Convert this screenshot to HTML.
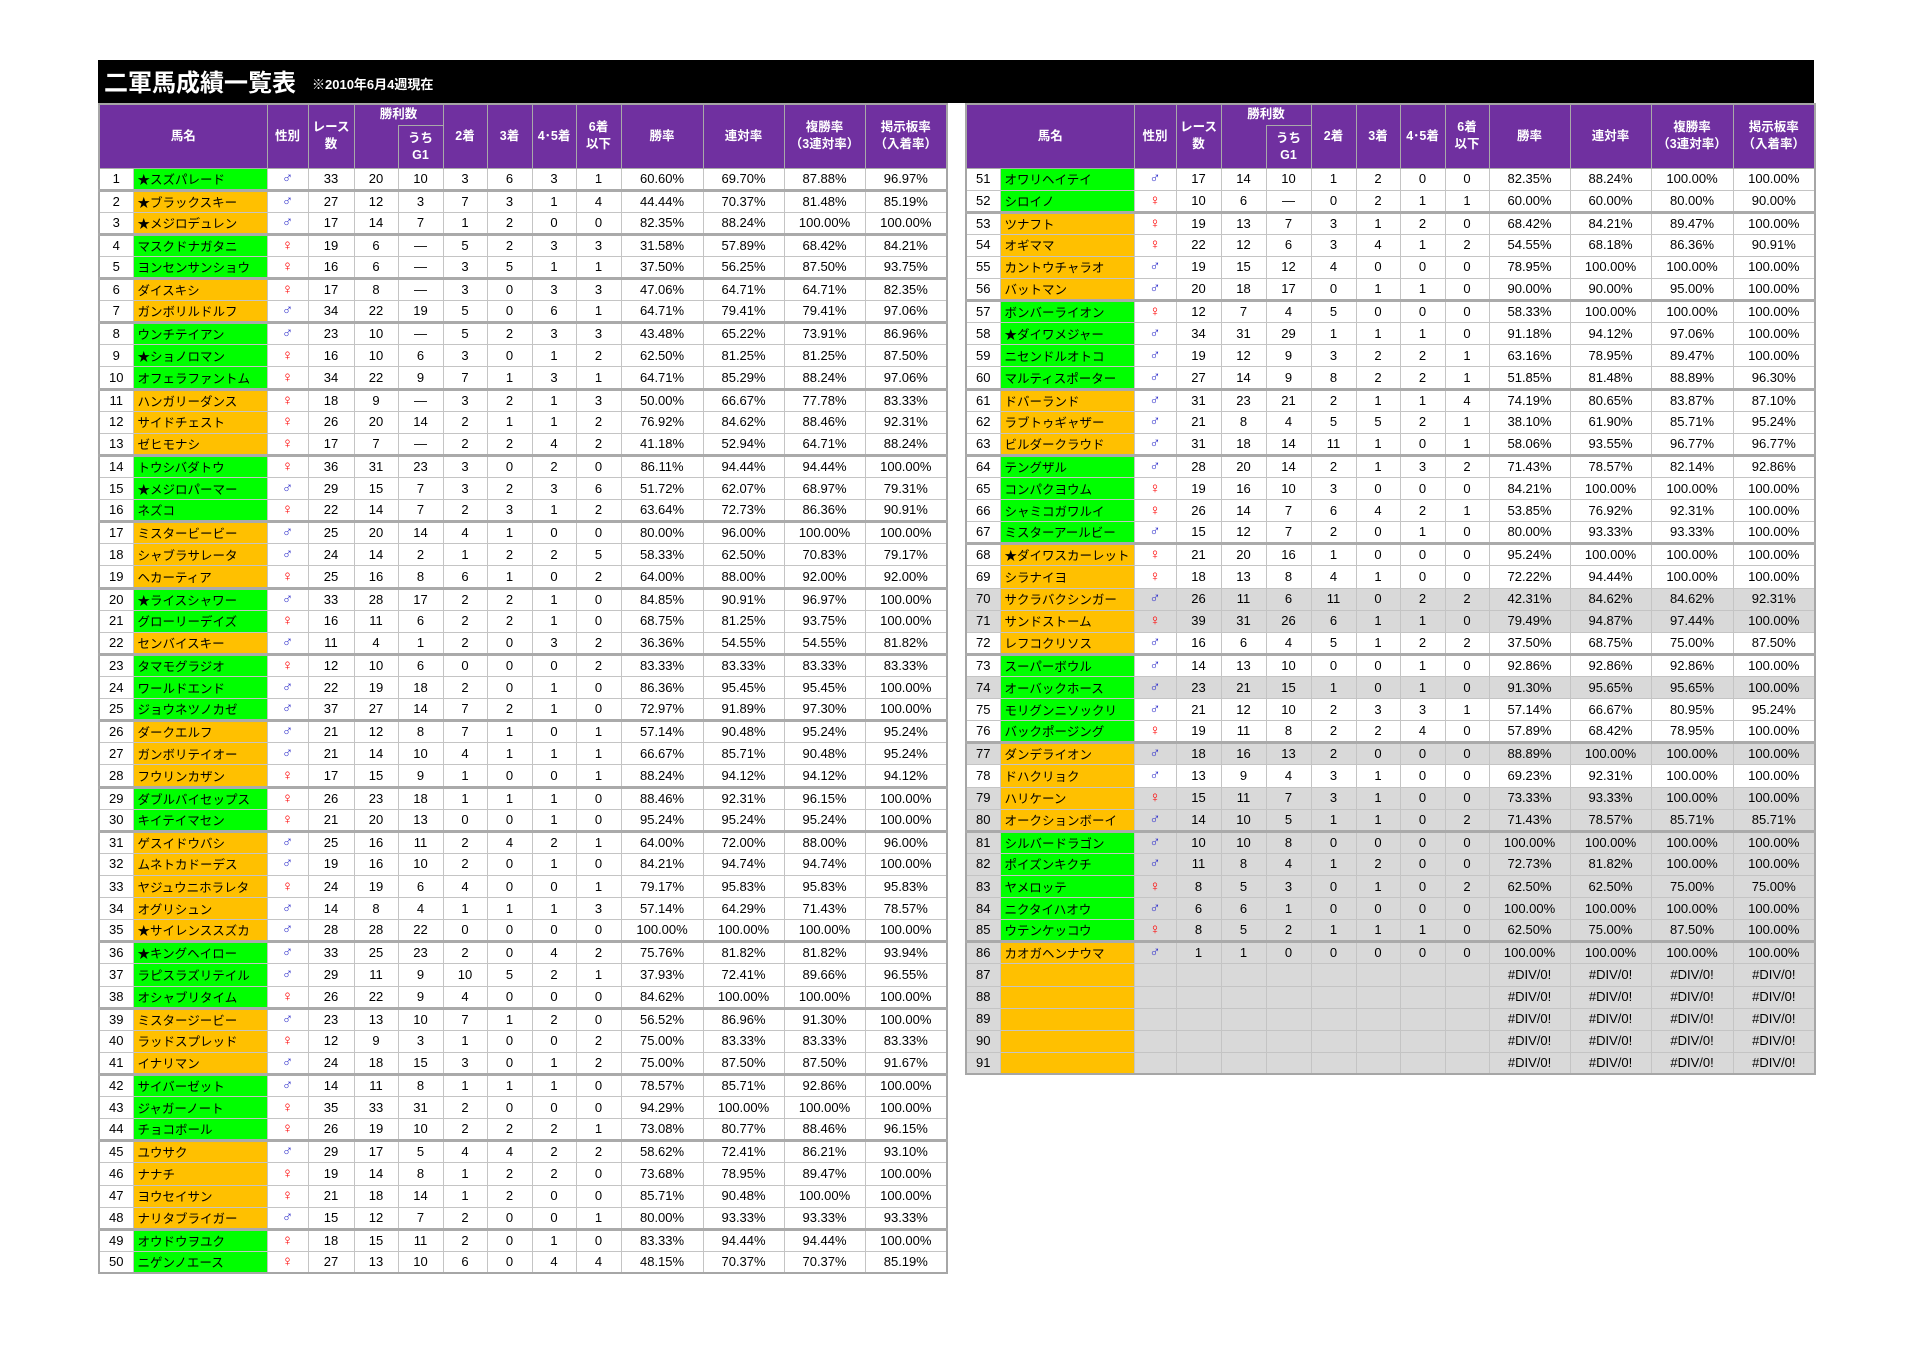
<!DOCTYPE html>
<html><head><meta charset="utf-8">
<style>
html,body{margin:0;padding:0;background:#fff;width:1913px;height:1352px;overflow:hidden;position:relative;font-family:"Liberation Sans","Noto Sans CJK JP",sans-serif;}
#bar{position:absolute;left:98px;top:60px;width:1716px;height:43px;background:#000;color:#fff;}
#bar .t{position:absolute;left:6px;top:5px;font-size:24px;font-weight:bold;letter-spacing:0;font-family:"Noto Sans CJK JP",sans-serif;line-height:32px}
#bar .s{position:absolute;left:214px;top:14px;font-size:13px;font-weight:bold;font-family:"Liberation Sans","Noto Sans CJK JP",sans-serif}
table{position:absolute;top:103px;border-collapse:collapse;table-layout:fixed;font-size:13px;color:#000}
td,th{border:1px solid #c4c4c4;padding:0;text-align:center;white-space:nowrap;overflow:hidden;line-height:14px}
th{background:#7030a0;color:#fff;font-weight:bold;font-size:12.5px;border-color:#a9a9a9;font-family:"Liberation Sans","Noto Sans CJK JP",sans-serif;line-height:17px}
tr.h1{height:21px}tr.h2{height:43px}
th.wl{border-bottom:none}th.nw{border-top:none}
tbody tr{height:22.12px}
td{background:#fff}
td.n{text-align:left;padding-left:4px;font-family:"Noto Sans CJK JP",sans-serif;font-size:12.5px}
td.g{background:#00ff00}td.o{background:#ffc000}
td.m{color:#3333cc;font-size:15px}td.f{color:#ff0000;font-size:15px}
tr.z td{background:#d9d9d9}tr.z td.g{background:#00ff00}tr.z td.o{background:#ffc000}
tr.k td{border-top:3px solid #aaa}
#L{left:98px;width:848px;border:2px solid #a6a6a6}
#R{left:965px;width:849px;border:2px solid #a6a6a6}
</style></head><body>
<div id="bar"><span class="t">二軍馬成績一覧表</span><span class="s">※2010年6月4週現在</span></div>

<table id="L">
<colgroup><col style="width:34px"><col style="width:134px"><col style="width:41px"><col style="width:46px"><col style="width:44px"><col style="width:45px"><col style="width:44px"><col style="width:45px"><col style="width:44px"><col style="width:45px"><col style="width:82px"><col style="width:81px"><col style="width:81px"><col style="width:82px"></colgroup>
<thead>
<tr class="h1"><th rowspan="2" colspan="2">馬名</th><th rowspan="2">性別</th><th rowspan="2">レース<br>数</th><th colspan="2" class="wl">勝利数</th><th rowspan="2">2着</th><th rowspan="2">3着</th><th rowspan="2">4･5着</th><th rowspan="2">6着<br>以下</th><th rowspan="2">勝率</th><th rowspan="2">連対率</th><th rowspan="2">複勝率<br>（3連対率）</th><th rowspan="2">掲示板率<br>（入着率）</th></tr>
<tr class="h2"><th class="nw"></th><th>うち<br>G1</th></tr>
</thead>
<tbody>
<tr><td>1</td><td class="n g">★スズパレード</td><td class="m">♂</td><td>33</td><td>20</td><td>10</td><td>3</td><td>6</td><td>3</td><td>1</td><td>60.60%</td><td>69.70%</td><td>87.88%</td><td>96.97%</td></tr>
<tr class="k"><td>2</td><td class="n o">★ブラックスキー</td><td class="m">♂</td><td>27</td><td>12</td><td>3</td><td>7</td><td>3</td><td>1</td><td>4</td><td>44.44%</td><td>70.37%</td><td>81.48%</td><td>85.19%</td></tr>
<tr><td>3</td><td class="n o">★メジロデュレン</td><td class="m">♂</td><td>17</td><td>14</td><td>7</td><td>1</td><td>2</td><td>0</td><td>0</td><td>82.35%</td><td>88.24%</td><td>100.00%</td><td>100.00%</td></tr>
<tr class="k"><td>4</td><td class="n g">マスクドナガタニ</td><td class="f">♀</td><td>19</td><td>6</td><td>—</td><td>5</td><td>2</td><td>3</td><td>3</td><td>31.58%</td><td>57.89%</td><td>68.42%</td><td>84.21%</td></tr>
<tr><td>5</td><td class="n g">ヨンセンサンショウ</td><td class="f">♀</td><td>16</td><td>6</td><td>—</td><td>3</td><td>5</td><td>1</td><td>1</td><td>37.50%</td><td>56.25%</td><td>87.50%</td><td>93.75%</td></tr>
<tr class="k"><td>6</td><td class="n o">ダイスキシ</td><td class="f">♀</td><td>17</td><td>8</td><td>—</td><td>3</td><td>0</td><td>3</td><td>3</td><td>47.06%</td><td>64.71%</td><td>64.71%</td><td>82.35%</td></tr>
<tr><td>7</td><td class="n o">ガンボリルドルフ</td><td class="m">♂</td><td>34</td><td>22</td><td>19</td><td>5</td><td>0</td><td>6</td><td>1</td><td>64.71%</td><td>79.41%</td><td>79.41%</td><td>97.06%</td></tr>
<tr class="k"><td>8</td><td class="n g">ウンチテイアン</td><td class="m">♂</td><td>23</td><td>10</td><td>—</td><td>5</td><td>2</td><td>3</td><td>3</td><td>43.48%</td><td>65.22%</td><td>73.91%</td><td>86.96%</td></tr>
<tr><td>9</td><td class="n g">★ショノロマン</td><td class="f">♀</td><td>16</td><td>10</td><td>6</td><td>3</td><td>0</td><td>1</td><td>2</td><td>62.50%</td><td>81.25%</td><td>81.25%</td><td>87.50%</td></tr>
<tr><td>10</td><td class="n g">オフェラファントム</td><td class="f">♀</td><td>34</td><td>22</td><td>9</td><td>7</td><td>1</td><td>3</td><td>1</td><td>64.71%</td><td>85.29%</td><td>88.24%</td><td>97.06%</td></tr>
<tr class="k"><td>11</td><td class="n o">ハンガリーダンス</td><td class="f">♀</td><td>18</td><td>9</td><td>—</td><td>3</td><td>2</td><td>1</td><td>3</td><td>50.00%</td><td>66.67%</td><td>77.78%</td><td>83.33%</td></tr>
<tr><td>12</td><td class="n o">サイドチェスト</td><td class="f">♀</td><td>26</td><td>20</td><td>14</td><td>2</td><td>1</td><td>1</td><td>2</td><td>76.92%</td><td>84.62%</td><td>88.46%</td><td>92.31%</td></tr>
<tr><td>13</td><td class="n o">ゼヒモナシ</td><td class="f">♀</td><td>17</td><td>7</td><td>—</td><td>2</td><td>2</td><td>4</td><td>2</td><td>41.18%</td><td>52.94%</td><td>64.71%</td><td>88.24%</td></tr>
<tr class="k"><td>14</td><td class="n g">トウシバダトウ</td><td class="f">♀</td><td>36</td><td>31</td><td>23</td><td>3</td><td>0</td><td>2</td><td>0</td><td>86.11%</td><td>94.44%</td><td>94.44%</td><td>100.00%</td></tr>
<tr><td>15</td><td class="n g">★メジロパーマー</td><td class="m">♂</td><td>29</td><td>15</td><td>7</td><td>3</td><td>2</td><td>3</td><td>6</td><td>51.72%</td><td>62.07%</td><td>68.97%</td><td>79.31%</td></tr>
<tr><td>16</td><td class="n g">ネズコ</td><td class="f">♀</td><td>22</td><td>14</td><td>7</td><td>2</td><td>3</td><td>1</td><td>2</td><td>63.64%</td><td>72.73%</td><td>86.36%</td><td>90.91%</td></tr>
<tr class="k"><td>17</td><td class="n o">ミスタービービー</td><td class="m">♂</td><td>25</td><td>20</td><td>14</td><td>4</td><td>1</td><td>0</td><td>0</td><td>80.00%</td><td>96.00%</td><td>100.00%</td><td>100.00%</td></tr>
<tr><td>18</td><td class="n o">シャブラサレータ</td><td class="m">♂</td><td>24</td><td>14</td><td>2</td><td>1</td><td>2</td><td>2</td><td>5</td><td>58.33%</td><td>62.50%</td><td>70.83%</td><td>79.17%</td></tr>
<tr><td>19</td><td class="n o">ヘカーティア</td><td class="f">♀</td><td>25</td><td>16</td><td>8</td><td>6</td><td>1</td><td>0</td><td>2</td><td>64.00%</td><td>88.00%</td><td>92.00%</td><td>92.00%</td></tr>
<tr class="k"><td>20</td><td class="n g">★ライスシャワー</td><td class="m">♂</td><td>33</td><td>28</td><td>17</td><td>2</td><td>2</td><td>1</td><td>0</td><td>84.85%</td><td>90.91%</td><td>96.97%</td><td>100.00%</td></tr>
<tr><td>21</td><td class="n g">グローリーデイズ</td><td class="f">♀</td><td>16</td><td>11</td><td>6</td><td>2</td><td>2</td><td>1</td><td>0</td><td>68.75%</td><td>81.25%</td><td>93.75%</td><td>100.00%</td></tr>
<tr><td>22</td><td class="n o">センバイスキー</td><td class="m">♂</td><td>11</td><td>4</td><td>1</td><td>2</td><td>0</td><td>3</td><td>2</td><td>36.36%</td><td>54.55%</td><td>54.55%</td><td>81.82%</td></tr>
<tr class="k"><td>23</td><td class="n g">タマモグラジオ</td><td class="f">♀</td><td>12</td><td>10</td><td>6</td><td>0</td><td>0</td><td>0</td><td>2</td><td>83.33%</td><td>83.33%</td><td>83.33%</td><td>83.33%</td></tr>
<tr><td>24</td><td class="n g">ワールドエンド</td><td class="m">♂</td><td>22</td><td>19</td><td>18</td><td>2</td><td>0</td><td>1</td><td>0</td><td>86.36%</td><td>95.45%</td><td>95.45%</td><td>100.00%</td></tr>
<tr><td>25</td><td class="n g">ジョウネツノカゼ</td><td class="m">♂</td><td>37</td><td>27</td><td>14</td><td>7</td><td>2</td><td>1</td><td>0</td><td>72.97%</td><td>91.89%</td><td>97.30%</td><td>100.00%</td></tr>
<tr class="k"><td>26</td><td class="n o">ダークエルフ</td><td class="m">♂</td><td>21</td><td>12</td><td>8</td><td>7</td><td>1</td><td>0</td><td>1</td><td>57.14%</td><td>90.48%</td><td>95.24%</td><td>95.24%</td></tr>
<tr><td>27</td><td class="n o">ガンボリテイオー</td><td class="m">♂</td><td>21</td><td>14</td><td>10</td><td>4</td><td>1</td><td>1</td><td>1</td><td>66.67%</td><td>85.71%</td><td>90.48%</td><td>95.24%</td></tr>
<tr><td>28</td><td class="n o">フウリンカザン</td><td class="f">♀</td><td>17</td><td>15</td><td>9</td><td>1</td><td>0</td><td>0</td><td>1</td><td>88.24%</td><td>94.12%</td><td>94.12%</td><td>94.12%</td></tr>
<tr class="k"><td>29</td><td class="n g">ダブルバイセップス</td><td class="f">♀</td><td>26</td><td>23</td><td>18</td><td>1</td><td>1</td><td>1</td><td>0</td><td>88.46%</td><td>92.31%</td><td>96.15%</td><td>100.00%</td></tr>
<tr><td>30</td><td class="n g">キイテイマセン</td><td class="f">♀</td><td>21</td><td>20</td><td>13</td><td>0</td><td>0</td><td>1</td><td>0</td><td>95.24%</td><td>95.24%</td><td>95.24%</td><td>100.00%</td></tr>
<tr class="k"><td>31</td><td class="n o">ゲスイドウバシ</td><td class="m">♂</td><td>25</td><td>16</td><td>11</td><td>2</td><td>4</td><td>2</td><td>1</td><td>64.00%</td><td>72.00%</td><td>88.00%</td><td>96.00%</td></tr>
<tr><td>32</td><td class="n o">ムネトカドーデス</td><td class="m">♂</td><td>19</td><td>16</td><td>10</td><td>2</td><td>0</td><td>1</td><td>0</td><td>84.21%</td><td>94.74%</td><td>94.74%</td><td>100.00%</td></tr>
<tr><td>33</td><td class="n o">ヤジュウニホラレタ</td><td class="f">♀</td><td>24</td><td>19</td><td>6</td><td>4</td><td>0</td><td>0</td><td>1</td><td>79.17%</td><td>95.83%</td><td>95.83%</td><td>95.83%</td></tr>
<tr><td>34</td><td class="n o">オグリシュン</td><td class="m">♂</td><td>14</td><td>8</td><td>4</td><td>1</td><td>1</td><td>1</td><td>3</td><td>57.14%</td><td>64.29%</td><td>71.43%</td><td>78.57%</td></tr>
<tr><td>35</td><td class="n o">★サイレンススズカ</td><td class="m">♂</td><td>28</td><td>28</td><td>22</td><td>0</td><td>0</td><td>0</td><td>0</td><td>100.00%</td><td>100.00%</td><td>100.00%</td><td>100.00%</td></tr>
<tr class="k"><td>36</td><td class="n g">★キングヘイロー</td><td class="m">♂</td><td>33</td><td>25</td><td>23</td><td>2</td><td>0</td><td>4</td><td>2</td><td>75.76%</td><td>81.82%</td><td>81.82%</td><td>93.94%</td></tr>
<tr><td>37</td><td class="n g">ラピスラズリテイル</td><td class="m">♂</td><td>29</td><td>11</td><td>9</td><td>10</td><td>5</td><td>2</td><td>1</td><td>37.93%</td><td>72.41%</td><td>89.66%</td><td>96.55%</td></tr>
<tr><td>38</td><td class="n g">オシャブリタイム</td><td class="f">♀</td><td>26</td><td>22</td><td>9</td><td>4</td><td>0</td><td>0</td><td>0</td><td>84.62%</td><td>100.00%</td><td>100.00%</td><td>100.00%</td></tr>
<tr class="k"><td>39</td><td class="n o">ミスタージービー</td><td class="m">♂</td><td>23</td><td>13</td><td>10</td><td>7</td><td>1</td><td>2</td><td>0</td><td>56.52%</td><td>86.96%</td><td>91.30%</td><td>100.00%</td></tr>
<tr><td>40</td><td class="n o">ラッドスプレッド</td><td class="f">♀</td><td>12</td><td>9</td><td>3</td><td>1</td><td>0</td><td>0</td><td>2</td><td>75.00%</td><td>83.33%</td><td>83.33%</td><td>83.33%</td></tr>
<tr><td>41</td><td class="n o">イナリマン</td><td class="m">♂</td><td>24</td><td>18</td><td>15</td><td>3</td><td>0</td><td>1</td><td>2</td><td>75.00%</td><td>87.50%</td><td>87.50%</td><td>91.67%</td></tr>
<tr class="k"><td>42</td><td class="n g">サイバーゼット</td><td class="m">♂</td><td>14</td><td>11</td><td>8</td><td>1</td><td>1</td><td>1</td><td>0</td><td>78.57%</td><td>85.71%</td><td>92.86%</td><td>100.00%</td></tr>
<tr><td>43</td><td class="n g">ジャガーノート</td><td class="f">♀</td><td>35</td><td>33</td><td>31</td><td>2</td><td>0</td><td>0</td><td>0</td><td>94.29%</td><td>100.00%</td><td>100.00%</td><td>100.00%</td></tr>
<tr><td>44</td><td class="n g">チョコボール</td><td class="f">♀</td><td>26</td><td>19</td><td>10</td><td>2</td><td>2</td><td>2</td><td>1</td><td>73.08%</td><td>80.77%</td><td>88.46%</td><td>96.15%</td></tr>
<tr class="k"><td>45</td><td class="n o">ユウサク</td><td class="m">♂</td><td>29</td><td>17</td><td>5</td><td>4</td><td>4</td><td>2</td><td>2</td><td>58.62%</td><td>72.41%</td><td>86.21%</td><td>93.10%</td></tr>
<tr><td>46</td><td class="n o">ナナチ</td><td class="f">♀</td><td>19</td><td>14</td><td>8</td><td>1</td><td>2</td><td>2</td><td>0</td><td>73.68%</td><td>78.95%</td><td>89.47%</td><td>100.00%</td></tr>
<tr><td>47</td><td class="n o">ヨウセイサン</td><td class="f">♀</td><td>21</td><td>18</td><td>14</td><td>1</td><td>2</td><td>0</td><td>0</td><td>85.71%</td><td>90.48%</td><td>100.00%</td><td>100.00%</td></tr>
<tr><td>48</td><td class="n o">ナリタブライガー</td><td class="m">♂</td><td>15</td><td>12</td><td>7</td><td>2</td><td>0</td><td>0</td><td>1</td><td>80.00%</td><td>93.33%</td><td>93.33%</td><td>93.33%</td></tr>
<tr class="k"><td>49</td><td class="n g">オウドウヲユク</td><td class="f">♀</td><td>18</td><td>15</td><td>11</td><td>2</td><td>0</td><td>1</td><td>0</td><td>83.33%</td><td>94.44%</td><td>94.44%</td><td>100.00%</td></tr>
<tr><td>50</td><td class="n g">ニゲンノエース</td><td class="f">♀</td><td>27</td><td>13</td><td>10</td><td>6</td><td>0</td><td>4</td><td>4</td><td>48.15%</td><td>70.37%</td><td>70.37%</td><td>85.19%</td></tr>
</tbody></table>

<table id="R">
<colgroup><col style="width:34px"><col style="width:134px"><col style="width:42px"><col style="width:45px"><col style="width:45px"><col style="width:45px"><col style="width:45px"><col style="width:44px"><col style="width:45px"><col style="width:44px"><col style="width:81px"><col style="width:81px"><col style="width:82px"><col style="width:82px"></colgroup>
<thead>
<tr class="h1"><th rowspan="2" colspan="2">馬名</th><th rowspan="2">性別</th><th rowspan="2">レース<br>数</th><th colspan="2" class="wl">勝利数</th><th rowspan="2">2着</th><th rowspan="2">3着</th><th rowspan="2">4･5着</th><th rowspan="2">6着<br>以下</th><th rowspan="2">勝率</th><th rowspan="2">連対率</th><th rowspan="2">複勝率<br>（3連対率）</th><th rowspan="2">掲示板率<br>（入着率）</th></tr>
<tr class="h2"><th class="nw"></th><th>うち<br>G1</th></tr>
</thead>
<tbody>
<tr><td>51</td><td class="n g">オワリヘイテイ</td><td class="m">♂</td><td>17</td><td>14</td><td>10</td><td>1</td><td>2</td><td>0</td><td>0</td><td>82.35%</td><td>88.24%</td><td>100.00%</td><td>100.00%</td></tr>
<tr><td>52</td><td class="n g">シロイノ</td><td class="f">♀</td><td>10</td><td>6</td><td>—</td><td>0</td><td>2</td><td>1</td><td>1</td><td>60.00%</td><td>60.00%</td><td>80.00%</td><td>90.00%</td></tr>
<tr class="k"><td>53</td><td class="n o">ツナフト</td><td class="f">♀</td><td>19</td><td>13</td><td>7</td><td>3</td><td>1</td><td>2</td><td>0</td><td>68.42%</td><td>84.21%</td><td>89.47%</td><td>100.00%</td></tr>
<tr><td>54</td><td class="n o">オギママ</td><td class="f">♀</td><td>22</td><td>12</td><td>6</td><td>3</td><td>4</td><td>1</td><td>2</td><td>54.55%</td><td>68.18%</td><td>86.36%</td><td>90.91%</td></tr>
<tr><td>55</td><td class="n o">カントウチャラオ</td><td class="m">♂</td><td>19</td><td>15</td><td>12</td><td>4</td><td>0</td><td>0</td><td>0</td><td>78.95%</td><td>100.00%</td><td>100.00%</td><td>100.00%</td></tr>
<tr><td>56</td><td class="n o">バットマン</td><td class="m">♂</td><td>20</td><td>18</td><td>17</td><td>0</td><td>1</td><td>1</td><td>0</td><td>90.00%</td><td>90.00%</td><td>95.00%</td><td>100.00%</td></tr>
<tr class="k"><td>57</td><td class="n g">ボンバーライオン</td><td class="f">♀</td><td>12</td><td>7</td><td>4</td><td>5</td><td>0</td><td>0</td><td>0</td><td>58.33%</td><td>100.00%</td><td>100.00%</td><td>100.00%</td></tr>
<tr><td>58</td><td class="n g">★ダイワメジャー</td><td class="m">♂</td><td>34</td><td>31</td><td>29</td><td>1</td><td>1</td><td>1</td><td>0</td><td>91.18%</td><td>94.12%</td><td>97.06%</td><td>100.00%</td></tr>
<tr><td>59</td><td class="n g">ニセンドルオトコ</td><td class="m">♂</td><td>19</td><td>12</td><td>9</td><td>3</td><td>2</td><td>2</td><td>1</td><td>63.16%</td><td>78.95%</td><td>89.47%</td><td>100.00%</td></tr>
<tr><td>60</td><td class="n g">マルティスポーター</td><td class="m">♂</td><td>27</td><td>14</td><td>9</td><td>8</td><td>2</td><td>2</td><td>1</td><td>51.85%</td><td>81.48%</td><td>88.89%</td><td>96.30%</td></tr>
<tr class="k"><td>61</td><td class="n o">ドバーランド</td><td class="m">♂</td><td>31</td><td>23</td><td>21</td><td>2</td><td>1</td><td>1</td><td>4</td><td>74.19%</td><td>80.65%</td><td>83.87%</td><td>87.10%</td></tr>
<tr><td>62</td><td class="n o">ラブトゥギャザー</td><td class="m">♂</td><td>21</td><td>8</td><td>4</td><td>5</td><td>5</td><td>2</td><td>1</td><td>38.10%</td><td>61.90%</td><td>85.71%</td><td>95.24%</td></tr>
<tr><td>63</td><td class="n o">ビルダークラウド</td><td class="m">♂</td><td>31</td><td>18</td><td>14</td><td>11</td><td>1</td><td>0</td><td>1</td><td>58.06%</td><td>93.55%</td><td>96.77%</td><td>96.77%</td></tr>
<tr class="k"><td>64</td><td class="n g">テングザル</td><td class="m">♂</td><td>28</td><td>20</td><td>14</td><td>2</td><td>1</td><td>3</td><td>2</td><td>71.43%</td><td>78.57%</td><td>82.14%</td><td>92.86%</td></tr>
<tr><td>65</td><td class="n g">コンパクヨウム</td><td class="f">♀</td><td>19</td><td>16</td><td>10</td><td>3</td><td>0</td><td>0</td><td>0</td><td>84.21%</td><td>100.00%</td><td>100.00%</td><td>100.00%</td></tr>
<tr><td>66</td><td class="n g">シャミコガワルイ</td><td class="f">♀</td><td>26</td><td>14</td><td>7</td><td>6</td><td>4</td><td>2</td><td>1</td><td>53.85%</td><td>76.92%</td><td>92.31%</td><td>100.00%</td></tr>
<tr><td>67</td><td class="n g">ミスターアールビー</td><td class="m">♂</td><td>15</td><td>12</td><td>7</td><td>2</td><td>0</td><td>1</td><td>0</td><td>80.00%</td><td>93.33%</td><td>93.33%</td><td>100.00%</td></tr>
<tr class="k"><td>68</td><td class="n o">★ダイワスカーレット</td><td class="f">♀</td><td>21</td><td>20</td><td>16</td><td>1</td><td>0</td><td>0</td><td>0</td><td>95.24%</td><td>100.00%</td><td>100.00%</td><td>100.00%</td></tr>
<tr><td>69</td><td class="n o">シラナイヨ</td><td class="f">♀</td><td>18</td><td>13</td><td>8</td><td>4</td><td>1</td><td>0</td><td>0</td><td>72.22%</td><td>94.44%</td><td>100.00%</td><td>100.00%</td></tr>
<tr class="z"><td>70</td><td class="n o">サクラバクシンガー</td><td class="m">♂</td><td>26</td><td>11</td><td>6</td><td>11</td><td>0</td><td>2</td><td>2</td><td>42.31%</td><td>84.62%</td><td>84.62%</td><td>92.31%</td></tr>
<tr class="z"><td>71</td><td class="n o">サンドストーム</td><td class="f">♀</td><td>39</td><td>31</td><td>26</td><td>6</td><td>1</td><td>1</td><td>0</td><td>79.49%</td><td>94.87%</td><td>97.44%</td><td>100.00%</td></tr>
<tr><td>72</td><td class="n o">レフコクリソス</td><td class="m">♂</td><td>16</td><td>6</td><td>4</td><td>5</td><td>1</td><td>2</td><td>2</td><td>37.50%</td><td>68.75%</td><td>75.00%</td><td>87.50%</td></tr>
<tr class="k"><td>73</td><td class="n g">スーパーボウル</td><td class="m">♂</td><td>14</td><td>13</td><td>10</td><td>0</td><td>0</td><td>1</td><td>0</td><td>92.86%</td><td>92.86%</td><td>92.86%</td><td>100.00%</td></tr>
<tr class="z"><td>74</td><td class="n g">オーバックホース</td><td class="m">♂</td><td>23</td><td>21</td><td>15</td><td>1</td><td>0</td><td>1</td><td>0</td><td>91.30%</td><td>95.65%</td><td>95.65%</td><td>100.00%</td></tr>
<tr><td>75</td><td class="n g">モリグンニソックリ</td><td class="m">♂</td><td>21</td><td>12</td><td>10</td><td>2</td><td>3</td><td>3</td><td>1</td><td>57.14%</td><td>66.67%</td><td>80.95%</td><td>95.24%</td></tr>
<tr><td>76</td><td class="n g">バックポージング</td><td class="f">♀</td><td>19</td><td>11</td><td>8</td><td>2</td><td>2</td><td>4</td><td>0</td><td>57.89%</td><td>68.42%</td><td>78.95%</td><td>100.00%</td></tr>
<tr class="k z"><td>77</td><td class="n o">ダンデライオン</td><td class="m">♂</td><td>18</td><td>16</td><td>13</td><td>2</td><td>0</td><td>0</td><td>0</td><td>88.89%</td><td>100.00%</td><td>100.00%</td><td>100.00%</td></tr>
<tr><td>78</td><td class="n o">ドハクリョク</td><td class="m">♂</td><td>13</td><td>9</td><td>4</td><td>3</td><td>1</td><td>0</td><td>0</td><td>69.23%</td><td>92.31%</td><td>100.00%</td><td>100.00%</td></tr>
<tr class="z"><td>79</td><td class="n o">ハリケーン</td><td class="f">♀</td><td>15</td><td>11</td><td>7</td><td>3</td><td>1</td><td>0</td><td>0</td><td>73.33%</td><td>93.33%</td><td>100.00%</td><td>100.00%</td></tr>
<tr class="z"><td>80</td><td class="n o">オークションボーイ</td><td class="m">♂</td><td>14</td><td>10</td><td>5</td><td>1</td><td>1</td><td>0</td><td>2</td><td>71.43%</td><td>78.57%</td><td>85.71%</td><td>85.71%</td></tr>
<tr class="k z"><td>81</td><td class="n g">シルバードラゴン</td><td class="m">♂</td><td>10</td><td>10</td><td>8</td><td>0</td><td>0</td><td>0</td><td>0</td><td>100.00%</td><td>100.00%</td><td>100.00%</td><td>100.00%</td></tr>
<tr class="z"><td>82</td><td class="n g">ポイズンキクチ</td><td class="m">♂</td><td>11</td><td>8</td><td>4</td><td>1</td><td>2</td><td>0</td><td>0</td><td>72.73%</td><td>81.82%</td><td>100.00%</td><td>100.00%</td></tr>
<tr class="z"><td>83</td><td class="n g">ヤメロッテ</td><td class="f">♀</td><td>8</td><td>5</td><td>3</td><td>0</td><td>1</td><td>0</td><td>2</td><td>62.50%</td><td>62.50%</td><td>75.00%</td><td>75.00%</td></tr>
<tr class="z"><td>84</td><td class="n g">ニクタイハオウ</td><td class="m">♂</td><td>6</td><td>6</td><td>1</td><td>0</td><td>0</td><td>0</td><td>0</td><td>100.00%</td><td>100.00%</td><td>100.00%</td><td>100.00%</td></tr>
<tr class="z"><td>85</td><td class="n g">ウテンケッコウ</td><td class="f">♀</td><td>8</td><td>5</td><td>2</td><td>1</td><td>1</td><td>1</td><td>0</td><td>62.50%</td><td>75.00%</td><td>87.50%</td><td>100.00%</td></tr>
<tr class="k z"><td>86</td><td class="n o">カオガヘンナウマ</td><td class="m">♂</td><td>1</td><td>1</td><td>0</td><td>0</td><td>0</td><td>0</td><td>0</td><td>100.00%</td><td>100.00%</td><td>100.00%</td><td>100.00%</td></tr>
<tr class="z"><td>87</td><td class="n o"></td><td></td><td></td><td></td><td></td><td></td><td></td><td></td><td></td><td>#DIV/0!</td><td>#DIV/0!</td><td>#DIV/0!</td><td>#DIV/0!</td></tr>
<tr class="z"><td>88</td><td class="n o"></td><td></td><td></td><td></td><td></td><td></td><td></td><td></td><td></td><td>#DIV/0!</td><td>#DIV/0!</td><td>#DIV/0!</td><td>#DIV/0!</td></tr>
<tr class="z"><td>89</td><td class="n o"></td><td></td><td></td><td></td><td></td><td></td><td></td><td></td><td></td><td>#DIV/0!</td><td>#DIV/0!</td><td>#DIV/0!</td><td>#DIV/0!</td></tr>
<tr class="z"><td>90</td><td class="n o"></td><td></td><td></td><td></td><td></td><td></td><td></td><td></td><td></td><td>#DIV/0!</td><td>#DIV/0!</td><td>#DIV/0!</td><td>#DIV/0!</td></tr>
<tr class="z"><td>91</td><td class="n o"></td><td></td><td></td><td></td><td></td><td></td><td></td><td></td><td></td><td>#DIV/0!</td><td>#DIV/0!</td><td>#DIV/0!</td><td>#DIV/0!</td></tr>
</tbody></table>
</body></html>
